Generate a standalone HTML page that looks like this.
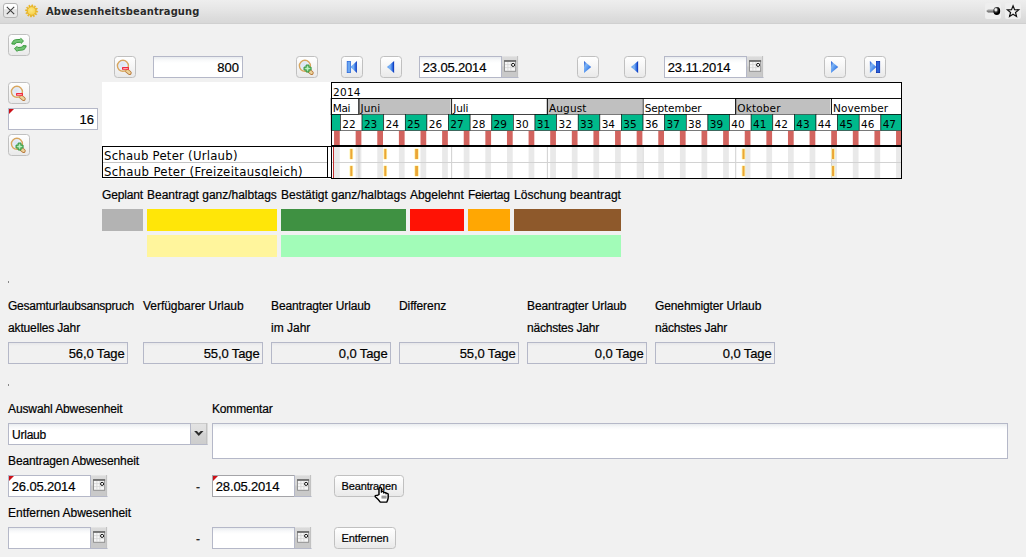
<!DOCTYPE html>
<html lang="de">
<head>
<meta charset="utf-8">
<title>Abwesenheitsbeantragung</title>
<style>
html,body{margin:0;padding:0}
body{-webkit-text-stroke:.2px #000;width:1026px;height:557px;overflow:hidden;background:#f1f1f1;position:relative;font-family:"Liberation Sans",sans-serif;font-size:12px;color:#000}
.abs,#page *{position:absolute;box-sizing:border-box}
#page{position:absolute;left:0;top:0;width:1026px;height:557px;overflow:hidden}
#page span.t{white-space:nowrap;line-height:14px}
#titlebar{left:0;top:0;width:1026px;height:24px;background:linear-gradient(#eeeeee 0,#e6e6e6 9px,#dddddd 17px,#d8d8d8 22.5px,#d0d0d0 23px,#d0d0d0 100%)}
#title{left:46px;top:5px;font-family:"DejaVu Sans Condensed","Liberation Sans",sans-serif;font-weight:bold;font-size:11px;color:#2a2a2a;-webkit-text-stroke:0;text-shadow:0 1px 0 rgba(255,255,255,.6);white-space:nowrap;line-height:14px}
.btn{width:22px;height:22px;border:1px solid #c0c0c0;border-radius:3.5px;background:linear-gradient(#ffffff 0,#f6f6f6 45%,#e9e9e9 100%)}
.btn svg{left:0;top:0}
.inp{height:22px;border:1px solid #b5b8c8;background:linear-gradient(#e9ecef 0,#f8f9fa 3px,#fff 6px);font-size:13px}
.inp.ro .v{right:2.5px;letter-spacing:-.12px}
.inp.ro{background:#f1f1f1 linear-gradient(#e6e6e9 0,#f1f1f1 3px)}
.inp .v{right:3px;top:3px;line-height:15px;white-space:nowrap}
.inp .l{left:2.8px;top:3px;line-height:15px;white-space:nowrap;letter-spacing:-.16px}
.cal{right:-1px;top:-1px;width:18px;height:22px;background:linear-gradient(#ececec 0,#dbdbdb 1px,#d5d5d5 10px,#c9c9c9 11px,#c9c9c9 100%);border-left:1px solid #b5b8c8;border-bottom:1px solid #b5b8c8;border-right:1px solid #ececec;box-shadow:inset -1px 0 0 #c2c2c2}
.tri{left:0;top:0;width:0;height:0;border-top:5.5px solid #cc1018;border-right:5.5px solid transparent}
.inp.inv{background:#fff}
.inp.foc{border-color:#a4a4a8}
.inp.foc .cal{right:-1px;top:-1px;width:18px;height:22px;background:linear-gradient(#ececec 0,#dbdbdb 1px,#d5d5d5 10px,#c9c9c9 11px,#c9c9c9 100%);border-left:1px solid #b5b8c8;border-bottom:1px solid #b5b8c8;border-right:1px solid #ececec;box-shadow:inset -1px 0 0 #c2c2c2}
.lbl{white-space:nowrap;line-height:14px;font-size:12px}
/* gantt */
#gwhite{left:102px;top:82px;width:800px;height:97px;background:#fff}
#ltab{left:102px;top:146px;width:226px;height:32px;border:1px solid #000;background:#fff}
#ltab2{left:327px;top:146px;width:5px;height:32px;border-top:1px solid #000;border-bottom:1px solid #000;background:#fff}
#tl{left:331px;top:82px;width:572px;height:97px;border:1px solid #000;background:#fff;overflow:hidden;font-family:"DejaVu Sans","Liberation Sans",sans-serif;font-size:12px}
#tl .yr{left:0;top:0;width:570px;height:16px;border-bottom:1px solid #000}
#tl .mo{top:16px;height:16px;background:#fff;border-left:1px solid #000}
#tl .mo.g{background:#c0c0c0;border-right:1px solid #fff}
#tl .mo span,#tl .yr span{left:1px;top:1px;line-height:15px;white-space:nowrap;letter-spacing:.3px}
#tl .wk{top:32px;height:16px;background:#fff;border-left:1px solid #000}
#tl .wk.gr{background:#00b98b}
#tl .wk span{left:2px;top:1px;line-height:15px;letter-spacing:.2px;font-size:12.5px}
#tl .we{top:48px;height:15px;background:#d2645f}
#tl .wb{top:65px;height:31px;background:#e9e9e9}
#tl .ms{top:65px;height:31px;width:1px;background:#d4d4d4}
#tl .ho{height:10px;background:#f0a830;box-shadow:0 0 1.5px 0.5px #ffef90}
#tl .thick{left:0;top:63px;width:570px;height:2px;background:#000}
#tl .rs{left:0;top:80px;width:570px;height:1px;background:#d0d0d0}
#tl .today{left:2px;top:65px;width:1px;height:31px;background:#c83030}
.gl{font-family:"DejaVu Sans","Liberation Sans",sans-serif;font-size:12px;white-space:nowrap;line-height:15px;letter-spacing:.17px}
.lg{height:22px}
</style>
</head>
<body>
<div id="page">
<div id="titlebar"></div>
<svg class="abs" width="0" height="0" style="left:0;top:0"><defs>
<radialGradient id="LG" cx=".4" cy=".4" r=".7"><stop offset="0" stop-color="#d9e4f4"/><stop offset=".7" stop-color="#ecf1f8"/><stop offset="1" stop-color="#fff"/></radialGradient>
<linearGradient id="bl" x1="0" y1="0" x2="1" y2="0"><stop offset="0" stop-color="#5a9cf0"/><stop offset=".45" stop-color="#7fb4f4"/><stop offset=".8" stop-color="#2a66dc"/><stop offset="1" stop-color="#0028b0"/></linearGradient>
<linearGradient id="br" x1="0" y1="0" x2="1" y2="1"><stop offset="0" stop-color="#1a50d0"/><stop offset=".3" stop-color="#7fb4f4"/><stop offset=".6" stop-color="#4a8cec"/><stop offset="1" stop-color="#0a34b8"/></linearGradient>
</defs></svg>
<!-- close button -->
<div class="abs" style="left:3px;top:3px;width:15px;height:15px;border:1px solid #b4b4b4;border-radius:3px;background:linear-gradient(#fff 0,#fdfdfd 35%,#e3e3e3 45%,#e9e9e9 100%)">
<svg width="13" height="13" viewBox="0 0 13 13" style="left:0;top:0"><path d="M2.8 2.8 L10.2 10.2 M10.2 2.8 L2.8 10.2" stroke="#3c3c3c" stroke-width="1.05" fill="none"/></svg>
</div>
<!-- sun icon -->
<svg class="abs" style="left:24px;top:3px" width="16" height="16" viewBox="0 0 16 16">
<defs><radialGradient id="sg" cx=".45" cy=".4" r=".6"><stop offset="0" stop-color="#fce680"/><stop offset="1" stop-color="#f6d048"/></radialGradient></defs>
<path d="M7.31 3.76L7.85 1.80L8.82 1.92L8.72 3.90ZM9.44 4.17L10.89 2.75L11.67 3.34L10.59 5.00ZM11.08 5.60L13.04 5.09L13.43 5.99L11.67 6.90ZM11.79 7.66L13.75 8.20L13.63 9.17L11.65 9.07ZM11.38 9.79L12.80 11.24L12.21 12.02L10.55 10.94ZM9.95 11.43L10.46 13.39L9.56 13.78L8.65 12.02ZM7.89 12.14L7.35 14.10L6.38 13.98L6.48 12.00ZM5.76 11.73L4.31 13.15L3.53 12.56L4.61 10.90ZM4.12 10.30L2.16 10.81L1.77 9.91L3.53 9.00ZM3.41 8.24L1.45 7.70L1.57 6.73L3.55 6.83ZM3.82 6.11L2.40 4.66L2.99 3.88L4.65 4.96ZM5.25 4.47L4.74 2.51L5.64 2.12L6.55 3.88Z" fill="#e8b21e" stroke="#e8b21e" stroke-width=".6" stroke-linejoin="round"/>
<circle cx="7.6" cy="7.95" r="4.3" fill="url(#sg)" stroke="#e6b224" stroke-width=".9"/>
</svg>
<div id="title" style="letter-spacing:0.147px;">Abwesenheitsbeantragung</div>
<!-- pin + star -->
<div class="abs" style="left:985px;top:3px;width:16px;height:16px;border-radius:2px;background:#eeeeee">
<svg width="16" height="16" viewBox="0 0 16 16" style="left:0;top:0"><defs><radialGradient id="pg" cx=".36" cy=".34" r=".6"><stop offset="0" stop-color="#fff"/><stop offset=".22" stop-color="#e0e0e0"/><stop offset=".5" stop-color="#3a3a3a"/><stop offset=".8" stop-color="#000"/></radialGradient><linearGradient id="ng" x1="0" y1="0" x2="0" y2="1"><stop offset="0" stop-color="#c4c4c4"/><stop offset="1" stop-color="#5a5a5a"/></linearGradient></defs>
<path d="M1.2 8 L3 6.2 H9.5 V9.6 H3 Z" fill="url(#ng)"/><ellipse cx="11.8" cy="8" rx="3.4" ry="4" fill="url(#pg)"/></svg>
</div>
<div class="abs" style="left:1005px;top:3px;width:16px;height:16px;border-radius:2px;background:#eeeeee">
<svg width="16" height="16" viewBox="0 0 16 16" style="left:0;top:0"><path d="M8.05 2.75 L9.58 6.60 L13.71 6.86 L10.52 9.50 L11.55 13.51 L8.05 11.30 L4.55 13.51 L5.58 9.50 L2.39 6.86 L6.52 6.60 Z" fill="#f1f1f1" stroke="#111" stroke-width="1.2" stroke-linejoin="miter"/></svg>
</div>

<!-- refresh -->
<div class="btn" style="left:8px;top:34px">
<svg width="20" height="20" viewBox="0 0 20 20"><defs><linearGradient id="gg" x1="0" y1="0" x2="0" y2="1"><stop offset="0" stop-color="#86cf86"/><stop offset="1" stop-color="#5fb862"/></linearGradient></defs>
<g fill="url(#gg)" stroke="#3b9b3f" stroke-width="1" stroke-linejoin="round">
<path d="M2.8 9 C3.1 6.9 4.5 5.1 6.3 4.8 L11.1 4.4 L11.8 3.4 L14.5 6 L12.1 8.4 L11.1 7.3 L7.9 7.5 C6.9 7.7 6.4 8.3 6 9.2 Z"/>
<path d="M2.8 9 C3.1 6.9 4.5 5.1 6.3 4.8 L11.1 4.4 L11.8 3.4 L14.5 6 L12.1 8.4 L11.1 7.3 L7.9 7.5 C6.9 7.7 6.4 8.3 6 9.2 Z" transform="rotate(180 10 9.9)"/>
</g></svg>
</div>

<!-- zoom row -->
<div class="btn" style="left:114px;top:56px"><svg width="20" height="20" viewBox="0 0 20 20"><path d="M11.2 13.2 L14.6 15.9" stroke="#b97a3c" stroke-width="4.2" stroke-linecap="round"/><path d="M11.4 13.2 L14.5 15.7" stroke="#ecd29a" stroke-width="2.6" stroke-linecap="round"/><circle cx="7.9" cy="8.8" r="5.5" fill="url(#LG)" stroke="#d8a65e" stroke-width="1.4"/><rect x="7" y="10" width="7" height="2.8" rx=".5" fill="#f22a3e"/><rect x="8.2" y="11" width="4.6" height=".9" fill="#fbb4ba"/></svg></div>
<div class="inp" style="left:153px;top:56px;width:90px"><span class="v">800</span></div>
<div class="btn" style="left:296px;top:56px"><svg width="20" height="20" viewBox="0 0 20 20"><path d="M11.2 13.2 L14.6 15.9" stroke="#b97a3c" stroke-width="4.2" stroke-linecap="round"/><path d="M11.4 13.2 L14.5 15.7" stroke="#ecd29a" stroke-width="2.6" stroke-linecap="round"/><circle cx="7.9" cy="8.8" r="5.5" fill="url(#LG)" stroke="#d8a65e" stroke-width="1.4"/><path d="M9.1 8 h2.9 v2.1 h2.1 v2.9 h-2.1 v2 h-2.9 v-2 h-2.1 v-2.9 h2.1 z" fill="#7fd088" stroke="#2f8f38" stroke-width=".9" stroke-linejoin="round"/><path d="M10.55 9.3v4.4M8.3 11.5h4.5" stroke="#c4efc8" stroke-width=".9"/></svg></div>
<div class="btn" style="left:341px;top:56px"><svg width="20" height="20" viewBox="0 0 20 20"><rect x="5.2" y="4.4" width="3.2" height="11.2" fill="#6aa6f0" stroke="#2a6adc" stroke-width=".8"/><path d="M14.9 4 V16 L8.4 10 Z" fill="url(#bl)"/></svg></div>
<div class="btn" style="left:380px;top:56px"><svg width="20" height="20" viewBox="0 0 20 20"><path d="M13.1 4 V16 L5.9 10 Z" fill="url(#bl)"/></svg></div>
<div class="inp" style="left:419px;top:56px;width:100px"><span class="l">23.05.2014</span><div class="cal"><svg width="17" height="22" viewBox="0 0 17 22" style="left:0;top:0"><rect x="2.1" y="4.1" width="12" height="11.6" fill="#8c8c8c"/><rect x="2.1" y="4.1" width="12" height="1.9" fill="#6f6f6f"/><rect x="3" y="5.9" width="10.2" height="8.9" fill="#f6f6f6"/><path d="M3 8.6h10.2M3 11.6h10.2M5.9 6v8.8M8.9 6v8.8" stroke="#d4d4d4" stroke-width=".8"/><circle cx="11.1" cy="8.9" r="1.55" fill="#fff" stroke="#111" stroke-width="1"/></svg></div></div>
<div class="btn" style="left:577px;top:56px"><svg width="20" height="20" viewBox="0 0 20 20"><path d="M6 4 V16 L13.2 10 Z" fill="url(#br)"/></svg></div>
<div class="btn" style="left:624px;top:56px"><svg width="20" height="20" viewBox="0 0 20 20"><path d="M13.1 4 V16 L5.9 10 Z" fill="url(#bl)"/></svg></div>
<div class="inp" style="left:664px;top:56px;width:100px"><span class="l">23.11.2014</span><div class="cal"><svg width="17" height="22" viewBox="0 0 17 22" style="left:0;top:0"><rect x="2.1" y="4.1" width="12" height="11.6" fill="#8c8c8c"/><rect x="2.1" y="4.1" width="12" height="1.9" fill="#6f6f6f"/><rect x="3" y="5.9" width="10.2" height="8.9" fill="#f6f6f6"/><path d="M3 8.6h10.2M3 11.6h10.2M5.9 6v8.8M8.9 6v8.8" stroke="#d4d4d4" stroke-width=".8"/><circle cx="11.1" cy="8.9" r="1.55" fill="#fff" stroke="#111" stroke-width="1"/></svg></div></div>
<div class="btn" style="left:824px;top:56px"><svg width="20" height="20" viewBox="0 0 20 20"><path d="M6 4 V16 L13.2 10 Z" fill="url(#br)"/></svg></div>
<div class="btn" style="left:864px;top:56px"><svg width="20" height="20" viewBox="0 0 20 20"><path d="M4.9 4 V16 L11.4 10 Z" fill="url(#br)"/><rect x="11.5" y="4.4" width="3.2" height="11.2" fill="#2a62d8" stroke="#0a34b4" stroke-width=".8"/></svg></div>

<!-- left col -->
<div class="btn" style="left:8px;top:82px"><svg width="20" height="20" viewBox="0 0 20 20"><path d="M11.2 13.2 L14.6 15.9" stroke="#b97a3c" stroke-width="4.2" stroke-linecap="round"/><path d="M11.4 13.2 L14.5 15.7" stroke="#ecd29a" stroke-width="2.6" stroke-linecap="round"/><circle cx="7.9" cy="8.8" r="5.5" fill="url(#LG)" stroke="#d8a65e" stroke-width="1.4"/><rect x="7" y="10" width="7" height="2.8" rx=".5" fill="#f22a3e"/><rect x="8.2" y="11" width="4.6" height=".9" fill="#fbb4ba"/></svg></div>
<div class="inp inv" style="left:8px;top:108px;width:90px"><div class="tri"></div><span class="v">16</span></div>
<div class="btn" style="left:8px;top:134px"><svg width="20" height="20" viewBox="0 0 20 20"><path d="M11.2 13.2 L14.6 15.9" stroke="#b97a3c" stroke-width="4.2" stroke-linecap="round"/><path d="M11.4 13.2 L14.5 15.7" stroke="#ecd29a" stroke-width="2.6" stroke-linecap="round"/><circle cx="7.9" cy="8.8" r="5.5" fill="url(#LG)" stroke="#d8a65e" stroke-width="1.4"/><path d="M9.1 8 h2.9 v2.1 h2.1 v2.9 h-2.1 v2 h-2.9 v-2 h-2.1 v-2.9 h2.1 z" fill="#7fd088" stroke="#2f8f38" stroke-width=".9" stroke-linejoin="round"/><path d="M10.55 9.3v4.4M8.3 11.5h4.5" stroke="#c4efc8" stroke-width=".9"/></svg></div>

<!-- gantt -->
<svg id="gsvg" class="abs" style="left:102px;top:82px" width="800" height="97" viewBox="102 82 800 97" font-family="'DejaVu Sans','Liberation Sans',sans-serif" font-size="10.5">
<rect x="102" y="82" width="800" height="97" fill="#fff"/>
<rect x="331.5" y="82.5" width="570" height="16" fill="#fff" stroke="#000" stroke-width="1"/>
<text x="333" y="96" textLength="27.5" lengthAdjust="spacing">2014</text>
<rect x="331.20" y="98.5" width="27.79" height="16" fill="#fff" stroke="#000" stroke-width=".9"/>
<text x="332.80" y="112" textLength="17.5" lengthAdjust="spacing">Mai</text>
<rect x="358.99" y="99" width="91.64" height="15" fill="#c0c0c0"/>
<path d="M358.99 98.5V114.5" stroke="#000" stroke-width=".9"/>
<text x="360.59" y="112" textLength="19.6" lengthAdjust="spacing">Juni</text>
<rect x="451.63" y="98.5" width="95.73" height="16" fill="#fff" stroke="#000" stroke-width=".9"/>
<text x="453.23" y="112" textLength="15.2" lengthAdjust="spacing">Juli</text>
<rect x="547.36" y="99" width="94.73" height="15" fill="#c0c0c0"/>
<path d="M547.36 98.5V114.5" stroke="#000" stroke-width=".9"/>
<text x="548.96" y="112" textLength="37.5" lengthAdjust="spacing">August</text>
<rect x="643.09" y="98.5" width="92.64" height="16" fill="#fff" stroke="#000" stroke-width=".9"/>
<text x="644.69" y="112" textLength="57" lengthAdjust="spacing">September</text>
<rect x="735.73" y="99" width="94.73" height="15" fill="#c0c0c0"/>
<path d="M735.73 98.5V114.5" stroke="#000" stroke-width=".9"/>
<text x="737.33" y="112" textLength="43.2" lengthAdjust="spacing">Oktober</text>
<rect x="831.46" y="98.5" width="71.02" height="16" fill="#fff" stroke="#000" stroke-width=".9"/>
<text x="833.06" y="112" textLength="55" lengthAdjust="spacing">November</text>
<rect x="331.20" y="114.5" width="9.26" height="16" fill="#00b98b" stroke="#000" stroke-opacity=".75" stroke-width=".7"/>
<rect x="340.46" y="114.5" width="21.62" height="16" fill="#fff" stroke="#000" stroke-opacity=".75" stroke-width=".7"/>
<text x="342.26" y="127.5" textLength="13.4" lengthAdjust="spacing">22</text>
<rect x="362.08" y="114.5" width="21.62" height="16" fill="#00b98b" stroke="#000" stroke-opacity=".75" stroke-width=".7"/>
<text x="363.88" y="127.5" textLength="13.4" lengthAdjust="spacing">23</text>
<rect x="383.70" y="114.5" width="21.62" height="16" fill="#fff" stroke="#000" stroke-opacity=".75" stroke-width=".7"/>
<text x="385.50" y="127.5" textLength="13.4" lengthAdjust="spacing">24</text>
<rect x="405.31" y="114.5" width="21.62" height="16" fill="#00b98b" stroke="#000" stroke-opacity=".75" stroke-width=".7"/>
<text x="407.11" y="127.5" textLength="13.4" lengthAdjust="spacing">25</text>
<rect x="426.93" y="114.5" width="21.62" height="16" fill="#fff" stroke="#000" stroke-opacity=".75" stroke-width=".7"/>
<text x="428.73" y="127.5" textLength="13.4" lengthAdjust="spacing">26</text>
<rect x="448.54" y="114.5" width="21.62" height="16" fill="#00b98b" stroke="#000" stroke-opacity=".75" stroke-width=".7"/>
<text x="450.34" y="127.5" textLength="13.4" lengthAdjust="spacing">27</text>
<rect x="470.16" y="114.5" width="21.62" height="16" fill="#fff" stroke="#000" stroke-opacity=".75" stroke-width=".7"/>
<text x="471.96" y="127.5" textLength="13.4" lengthAdjust="spacing">28</text>
<rect x="491.78" y="114.5" width="21.62" height="16" fill="#00b98b" stroke="#000" stroke-opacity=".75" stroke-width=".7"/>
<text x="493.58" y="127.5" textLength="13.4" lengthAdjust="spacing">29</text>
<rect x="513.39" y="114.5" width="21.62" height="16" fill="#fff" stroke="#000" stroke-opacity=".75" stroke-width=".7"/>
<text x="515.19" y="127.5" textLength="13.4" lengthAdjust="spacing">30</text>
<rect x="535.01" y="114.5" width="21.62" height="16" fill="#00b98b" stroke="#000" stroke-opacity=".75" stroke-width=".7"/>
<text x="536.81" y="127.5" textLength="13.4" lengthAdjust="spacing">31</text>
<rect x="556.62" y="114.5" width="21.62" height="16" fill="#fff" stroke="#000" stroke-opacity=".75" stroke-width=".7"/>
<text x="558.42" y="127.5" textLength="13.4" lengthAdjust="spacing">32</text>
<rect x="578.24" y="114.5" width="21.62" height="16" fill="#00b98b" stroke="#000" stroke-opacity=".75" stroke-width=".7"/>
<text x="580.04" y="127.5" textLength="13.4" lengthAdjust="spacing">33</text>
<rect x="599.86" y="114.5" width="21.62" height="16" fill="#fff" stroke="#000" stroke-opacity=".75" stroke-width=".7"/>
<text x="601.66" y="127.5" textLength="13.4" lengthAdjust="spacing">34</text>
<rect x="621.47" y="114.5" width="21.62" height="16" fill="#00b98b" stroke="#000" stroke-opacity=".75" stroke-width=".7"/>
<text x="623.27" y="127.5" textLength="13.4" lengthAdjust="spacing">35</text>
<rect x="643.09" y="114.5" width="21.62" height="16" fill="#fff" stroke="#000" stroke-opacity=".75" stroke-width=".7"/>
<text x="644.89" y="127.5" textLength="13.4" lengthAdjust="spacing">36</text>
<rect x="664.70" y="114.5" width="21.62" height="16" fill="#00b98b" stroke="#000" stroke-opacity=".75" stroke-width=".7"/>
<text x="666.50" y="127.5" textLength="13.4" lengthAdjust="spacing">37</text>
<rect x="686.32" y="114.5" width="21.62" height="16" fill="#fff" stroke="#000" stroke-opacity=".75" stroke-width=".7"/>
<text x="688.12" y="127.5" textLength="13.4" lengthAdjust="spacing">38</text>
<rect x="707.94" y="114.5" width="21.62" height="16" fill="#00b98b" stroke="#000" stroke-opacity=".75" stroke-width=".7"/>
<text x="709.74" y="127.5" textLength="13.4" lengthAdjust="spacing">39</text>
<rect x="729.55" y="114.5" width="21.62" height="16" fill="#fff" stroke="#000" stroke-opacity=".75" stroke-width=".7"/>
<text x="731.35" y="127.5" textLength="13.4" lengthAdjust="spacing">40</text>
<rect x="751.17" y="114.5" width="21.62" height="16" fill="#00b98b" stroke="#000" stroke-opacity=".75" stroke-width=".7"/>
<text x="752.97" y="127.5" textLength="13.4" lengthAdjust="spacing">41</text>
<rect x="772.78" y="114.5" width="21.62" height="16" fill="#fff" stroke="#000" stroke-opacity=".75" stroke-width=".7"/>
<text x="774.58" y="127.5" textLength="13.4" lengthAdjust="spacing">42</text>
<rect x="794.40" y="114.5" width="21.62" height="16" fill="#00b98b" stroke="#000" stroke-opacity=".75" stroke-width=".7"/>
<text x="796.20" y="127.5" textLength="13.4" lengthAdjust="spacing">43</text>
<rect x="816.02" y="114.5" width="21.62" height="16" fill="#fff" stroke="#000" stroke-opacity=".75" stroke-width=".7"/>
<text x="817.82" y="127.5" textLength="13.4" lengthAdjust="spacing">44</text>
<rect x="837.63" y="114.5" width="21.62" height="16" fill="#00b98b" stroke="#000" stroke-opacity=".75" stroke-width=".7"/>
<text x="839.43" y="127.5" textLength="13.4" lengthAdjust="spacing">45</text>
<rect x="859.25" y="114.5" width="21.62" height="16" fill="#fff" stroke="#000" stroke-opacity=".75" stroke-width=".7"/>
<text x="861.05" y="127.5" textLength="13.4" lengthAdjust="spacing">46</text>
<rect x="880.86" y="114.5" width="21.62" height="16" fill="#00b98b" stroke="#000" stroke-opacity=".75" stroke-width=".7"/>
<text x="882.66" y="127.5" textLength="13.4" lengthAdjust="spacing">47</text>
<rect x="332" y="131" width="569" height="14" fill="#fff"/>
<rect x="334.04" y="131" width="5.73" height="14" fill="#d2645f"/>
<rect x="334.04" y="147" width="5.73" height="31" fill="#e9e9e9"/>
<rect x="355.65" y="131" width="5.73" height="14" fill="#d2645f"/>
<rect x="355.65" y="147" width="5.73" height="31" fill="#e9e9e9"/>
<rect x="377.27" y="131" width="5.73" height="14" fill="#d2645f"/>
<rect x="377.27" y="147" width="5.73" height="31" fill="#e9e9e9"/>
<rect x="398.89" y="131" width="5.73" height="14" fill="#d2645f"/>
<rect x="398.89" y="147" width="5.73" height="31" fill="#e9e9e9"/>
<rect x="420.50" y="131" width="5.73" height="14" fill="#d2645f"/>
<rect x="420.50" y="147" width="5.73" height="31" fill="#e9e9e9"/>
<rect x="442.12" y="131" width="5.73" height="14" fill="#d2645f"/>
<rect x="442.12" y="147" width="5.73" height="31" fill="#e9e9e9"/>
<rect x="463.73" y="131" width="5.73" height="14" fill="#d2645f"/>
<rect x="463.73" y="147" width="5.73" height="31" fill="#e9e9e9"/>
<rect x="485.35" y="131" width="5.73" height="14" fill="#d2645f"/>
<rect x="485.35" y="147" width="5.73" height="31" fill="#e9e9e9"/>
<rect x="506.97" y="131" width="5.73" height="14" fill="#d2645f"/>
<rect x="506.97" y="147" width="5.73" height="31" fill="#e9e9e9"/>
<rect x="528.58" y="131" width="5.73" height="14" fill="#d2645f"/>
<rect x="528.58" y="147" width="5.73" height="31" fill="#e9e9e9"/>
<rect x="550.20" y="131" width="5.73" height="14" fill="#d2645f"/>
<rect x="550.20" y="147" width="5.73" height="31" fill="#e9e9e9"/>
<rect x="571.81" y="131" width="5.73" height="14" fill="#d2645f"/>
<rect x="571.81" y="147" width="5.73" height="31" fill="#e9e9e9"/>
<rect x="593.43" y="131" width="5.73" height="14" fill="#d2645f"/>
<rect x="593.43" y="147" width="5.73" height="31" fill="#e9e9e9"/>
<rect x="615.05" y="131" width="5.73" height="14" fill="#d2645f"/>
<rect x="615.05" y="147" width="5.73" height="31" fill="#e9e9e9"/>
<rect x="636.66" y="131" width="5.73" height="14" fill="#d2645f"/>
<rect x="636.66" y="147" width="5.73" height="31" fill="#e9e9e9"/>
<rect x="658.28" y="131" width="5.73" height="14" fill="#d2645f"/>
<rect x="658.28" y="147" width="5.73" height="31" fill="#e9e9e9"/>
<rect x="679.89" y="131" width="5.73" height="14" fill="#d2645f"/>
<rect x="679.89" y="147" width="5.73" height="31" fill="#e9e9e9"/>
<rect x="701.51" y="131" width="5.73" height="14" fill="#d2645f"/>
<rect x="701.51" y="147" width="5.73" height="31" fill="#e9e9e9"/>
<rect x="723.13" y="131" width="5.73" height="14" fill="#d2645f"/>
<rect x="723.13" y="147" width="5.73" height="31" fill="#e9e9e9"/>
<rect x="744.74" y="131" width="5.73" height="14" fill="#d2645f"/>
<rect x="744.74" y="147" width="5.73" height="31" fill="#e9e9e9"/>
<rect x="766.36" y="131" width="5.73" height="14" fill="#d2645f"/>
<rect x="766.36" y="147" width="5.73" height="31" fill="#e9e9e9"/>
<rect x="787.97" y="131" width="5.73" height="14" fill="#d2645f"/>
<rect x="787.97" y="147" width="5.73" height="31" fill="#e9e9e9"/>
<rect x="809.59" y="131" width="5.73" height="14" fill="#d2645f"/>
<rect x="809.59" y="147" width="5.73" height="31" fill="#e9e9e9"/>
<rect x="831.21" y="131" width="5.73" height="14" fill="#d2645f"/>
<rect x="831.21" y="147" width="5.73" height="31" fill="#e9e9e9"/>
<rect x="852.82" y="131" width="5.73" height="14" fill="#d2645f"/>
<rect x="852.82" y="147" width="5.73" height="31" fill="#e9e9e9"/>
<rect x="874.44" y="131" width="5.73" height="14" fill="#d2645f"/>
<rect x="874.44" y="147" width="5.73" height="31" fill="#e9e9e9"/>
<rect x="896.05" y="131" width="5.73" height="14" fill="#d2645f"/>
<rect x="896.05" y="147" width="5.73" height="31" fill="#e9e9e9"/>
<path d="M358.99 147V178" stroke="#cfcfcf" stroke-width="1"/>
<path d="M451.63 147V178" stroke="#cfcfcf" stroke-width="1"/>
<path d="M547.36 147V178" stroke="#cfcfcf" stroke-width="1"/>
<path d="M643.09 147V178" stroke="#cfcfcf" stroke-width="1"/>
<path d="M735.73 147V178" stroke="#cfcfcf" stroke-width="1"/>
<path d="M831.46 147V178" stroke="#cfcfcf" stroke-width="1"/>
<path d="M332 162.5H901" stroke="#d2d2d2" stroke-width="1"/>
<rect x="349.53" y="148.5" width="3.60" height="11" fill="#fff2a0" rx="1"/>
<rect x="350.33" y="149" width="2.00" height="10" fill="#eba536"/>
<rect x="349.53" y="165.5" width="3.60" height="11" fill="#fff2a0" rx="1"/>
<rect x="350.33" y="166" width="2.00" height="10" fill="#eba536"/>
<rect x="383.50" y="148.5" width="3.60" height="11" fill="#fff2a0" rx="1"/>
<rect x="384.30" y="149" width="2.00" height="10" fill="#eba536"/>
<rect x="383.50" y="165.5" width="3.60" height="11" fill="#fff2a0" rx="1"/>
<rect x="384.30" y="166" width="2.00" height="10" fill="#eba536"/>
<rect x="414.38" y="148.5" width="4.40" height="11" fill="#fff2a0" rx="1"/>
<rect x="415.18" y="149" width="2.80" height="10" fill="#eba536"/>
<rect x="414.38" y="165.5" width="4.40" height="11" fill="#fff2a0" rx="1"/>
<rect x="415.18" y="166" width="2.80" height="10" fill="#eba536"/>
<rect x="741.70" y="148.5" width="3.60" height="11" fill="#fff2a0" rx="1"/>
<rect x="742.50" y="149" width="2.00" height="10" fill="#eba536"/>
<rect x="741.70" y="165.5" width="3.60" height="11" fill="#fff2a0" rx="1"/>
<rect x="742.50" y="166" width="2.00" height="10" fill="#eba536"/>
<rect x="831.26" y="148.5" width="3.60" height="11" fill="#fff2a0" rx="1"/>
<rect x="832.06" y="149" width="2.00" height="10" fill="#eba536"/>
<rect x="831.26" y="165.5" width="3.60" height="11" fill="#fff2a0" rx="1"/>
<rect x="832.06" y="166" width="2.00" height="10" fill="#eba536"/>
<path d="M333.5 147V178" stroke="#c43030" stroke-width="1"/>
<rect x="331" y="145" width="571" height="2" fill="#000"/>
<path d="M331.5 82V179 M901.5 82V179 M331 178.5H902" stroke="#000" stroke-width="1" fill="none"/>
<rect x="102.5" y="146.5" width="225" height="31" fill="#fff" stroke="#000" stroke-width="1"/>
<path d="M327 146.5H332 M327 177.5H332" stroke="#000" stroke-width="1"/>
<path d="M103 162.5H327" stroke="#c4c4c4" stroke-width="1"/>
<svg x="103" y="147" width="224" height="30" viewBox="103 147 224 30" overflow="hidden"><g font-family="'DejaVu Sans Condensed','DejaVu Sans','Liberation Sans',sans-serif" font-size="13">
<text x="104" y="159.5" textLength="133.5" lengthAdjust="spacing">Schaub Peter (Urlaub)</text>
<text x="104" y="175.5" textLength="198.5" lengthAdjust="spacing">Schaub Peter (Freizeitausgleich)</text>
</g></svg>
</svg>

<!-- legend -->
<span class="lbl" style="letter-spacing:-0.147px;left:102px;top:188px">Geplant</span>
<span class="lbl" style="letter-spacing:-0.013px;left:147px;top:188px">Beantragt ganz/halbtags</span>
<span class="lbl" style="letter-spacing:0.019px;left:281px;top:188px">Bestätigt ganz/halbtags</span>
<span class="lbl" style="letter-spacing:-0.027px;left:410px;top:188px">Abgelehnt</span>
<span class="lbl" style="letter-spacing:-0.316px;left:468px;top:188px">Feiertag</span>
<span class="lbl" style="letter-spacing:0.050px;left:514px;top:188px">Löschung beantragt</span>
<div class="lg" style="left:102px;top:209px;width:41px;background:#b3b3b3"></div>
<div class="lg" style="left:147px;top:209px;width:130px;background:#ffe608"></div>
<div class="lg" style="left:281px;top:209px;width:125px;background:#3f9142"></div>
<div class="lg" style="left:410px;top:209px;width:54px;background:#ff1205"></div>
<div class="lg" style="left:468px;top:209px;width:42px;background:#ffa703"></div>
<div class="lg" style="left:514px;top:209px;width:107px;background:#8e592b"></div>
<div class="lg" style="left:147px;top:235px;width:130px;background:#fff59c"></div>
<div class="lg" style="left:281px;top:235px;width:340px;background:#a2fcb8"></div>

<!-- tiny marks -->
<div class="abs" style="left:8px;top:281px;width:1px;height:2px;background:#888"></div>
<div class="abs" style="left:8px;top:384px;width:1px;height:2px;background:#888"></div>

<!-- summary -->
<span class="lbl" style="letter-spacing:-0.225px;left:8px;top:299px">Gesamturlaubsanspruch</span>
<span class="lbl" style="letter-spacing:-0.146px;left:8px;top:321px">aktuelles Jahr</span>
<span class="lbl" style="letter-spacing:-0.044px;left:143px;top:299px">Verfügbarer Urlaub</span>
<span class="lbl" style="letter-spacing:-0.111px;left:271px;top:299px">Beantragter Urlaub</span>
<span class="lbl" style="letter-spacing:-0.006px;left:271px;top:321px">im Jahr</span>
<span class="lbl" style="letter-spacing:-0.068px;left:399px;top:299px">Differenz</span>
<span class="lbl" style="letter-spacing:-0.111px;left:527px;top:299px">Beantragter Urlaub</span>
<span class="lbl" style="letter-spacing:-0.209px;left:527px;top:321px">nächstes Jahr</span>
<span class="lbl" style="letter-spacing:-0.103px;left:655px;top:299px">Genehmigter Urlaub</span>
<span class="lbl" style="letter-spacing:-0.209px;left:655px;top:321px">nächstes Jahr</span>
<div class="inp ro" style="left:8px;top:342px;width:120px"><span class="v">56,0 Tage</span></div>
<div class="inp ro" style="left:143px;top:342px;width:120px"><span class="v">55,0 Tage</span></div>
<div class="inp ro" style="left:271px;top:342px;width:120px"><span class="v">0,0 Tage</span></div>
<div class="inp ro" style="left:399px;top:342px;width:120px"><span class="v">55,0 Tage</span></div>
<div class="inp ro" style="left:527px;top:342px;width:120px"><span class="v">0,0 Tage</span></div>
<div class="inp ro" style="left:655px;top:342px;width:120px"><span class="v">0,0 Tage</span></div>

<!-- form -->
<span class="lbl" style="letter-spacing:-0.113px;left:8px;top:402px">Auswahl Abwesenheit</span>
<span class="lbl" style="letter-spacing:-0.159px;left:212px;top:402px">Kommentar</span>
<div class="inp" style="left:8px;top:423px;width:200px"><span class="l" style="letter-spacing:-0.227px;font-size:12px;left:3px;top:4px">Urlaub</span>
<div class="cal" style="background:linear-gradient(#b4b4b4 0,#e3e3e3 1px,#dedede 9px,#d3d3d3 10px,#cdcdcd 100%);border-right:1px solid #dadada"><svg width="17" height="22" viewBox="0 0 17 22" style="left:1px;top:0"><path d="M2.1 7.9 H4.9 L6.8 9.9 L8.7 7.9 H11.5 L6.8 13.1 Z" fill="#2c2c2c"/></svg></div></div>
<div class="inp" style="left:212px;top:423px;width:796px;height:36px"></div>
<span class="lbl" style="letter-spacing:-0.111px;left:8px;top:454px">Beantragen Abwesenheit</span>
<div class="inp inv" style="left:8px;top:475px;width:100px"><div class="tri"></div><span class="l">26.05.2014</span><div class="cal"><svg width="17" height="22" viewBox="0 0 17 22" style="left:0;top:0"><rect x="2.1" y="4.1" width="12" height="11.6" fill="#8c8c8c"/><rect x="2.1" y="4.1" width="12" height="1.9" fill="#6f6f6f"/><rect x="3" y="5.9" width="10.2" height="8.9" fill="#f6f6f6"/><path d="M3 8.6h10.2M3 11.6h10.2M5.9 6v8.8M8.9 6v8.8" stroke="#d4d4d4" stroke-width=".8"/><circle cx="11.1" cy="8.9" r="1.55" fill="#fff" stroke="#111" stroke-width="1"/></svg></div></div>
<span class="lbl" style="left:196px;top:480px;color:#333">-</span>
<div class="inp inv foc" style="left:212px;top:475px;width:100px"><div class="tri"></div><span class="l">28.05.2014</span><div class="cal"><svg width="17" height="22" viewBox="0 0 17 22" style="left:0;top:0"><rect x="2.1" y="4.1" width="12" height="11.6" fill="#8c8c8c"/><rect x="2.1" y="4.1" width="12" height="1.9" fill="#6f6f6f"/><rect x="3" y="5.9" width="10.2" height="8.9" fill="#f6f6f6"/><path d="M3 8.6h10.2M3 11.6h10.2M5.9 6v8.8M8.9 6v8.8" stroke="#d4d4d4" stroke-width=".8"/><circle cx="11.1" cy="8.9" r="1.55" fill="#fff" stroke="#111" stroke-width="1"/></svg></div></div>
<div class="btn" style="left:334px;top:475px;width:70px"><span class="lbl" style="letter-spacing:-0.139px;left:6.5px;top:3px;font-size:11px">Beantragen</span></div>
<span class="lbl" style="letter-spacing:-0.020px;left:8px;top:506px">Entfernen Abwesenheit</span>
<div class="inp" style="left:8px;top:527px;width:100px"><div class="cal"><svg width="17" height="22" viewBox="0 0 17 22" style="left:0;top:0"><rect x="2.1" y="4.1" width="12" height="11.6" fill="#8c8c8c"/><rect x="2.1" y="4.1" width="12" height="1.9" fill="#6f6f6f"/><rect x="3" y="5.9" width="10.2" height="8.9" fill="#f6f6f6"/><path d="M3 8.6h10.2M3 11.6h10.2M5.9 6v8.8M8.9 6v8.8" stroke="#d4d4d4" stroke-width=".8"/><circle cx="11.1" cy="8.9" r="1.55" fill="#fff" stroke="#111" stroke-width="1"/></svg></div></div>
<span class="lbl" style="left:196px;top:532px;color:#333">-</span>
<div class="inp" style="left:212px;top:527px;width:100px"><div class="cal"><svg width="17" height="22" viewBox="0 0 17 22" style="left:0;top:0"><rect x="2.1" y="4.1" width="12" height="11.6" fill="#8c8c8c"/><rect x="2.1" y="4.1" width="12" height="1.9" fill="#6f6f6f"/><rect x="3" y="5.9" width="10.2" height="8.9" fill="#f6f6f6"/><path d="M3 8.6h10.2M3 11.6h10.2M5.9 6v8.8M8.9 6v8.8" stroke="#d4d4d4" stroke-width=".8"/><circle cx="11.1" cy="8.9" r="1.55" fill="#fff" stroke="#111" stroke-width="1"/></svg></div></div>
<div class="btn" style="left:334px;top:527px;width:62px"><span class="lbl" style="letter-spacing:-0.078px;left:6.5px;top:3px;font-size:11px">Entfernen</span></div>

<!-- cursor -->
<svg class="abs" style="left:372px;top:485px" width="22" height="20" viewBox="0 0 22 20">
<g transform="translate(0.5,0) scale(1.18,1)">
<path d="M5.5 9.4 V3.4 C5.5 2 7.6 2 7.6 3.4 V7.2 C7.6 6.1 9.6 6.1 9.6 7.4 V8 C9.6 7 11.5 7 11.5 8.2 V8.8 C11.5 8 13.3 8 13.3 9.2 V12.5 C13.3 14.5 12.5 15.5 12.2 17 H6.5 C5.8 15.3 4.2 13.6 2.6 12 C1.6 10.9 3 9.8 4 10.6 Z" fill="#fff" stroke="#000" stroke-width="1.25" stroke-linejoin="round"/>
<rect x="7.6" y="10.6" width="4.4" height="3" fill="#9a9a9a"/>
</g>
</svg>

</div>
</body>
</html>
